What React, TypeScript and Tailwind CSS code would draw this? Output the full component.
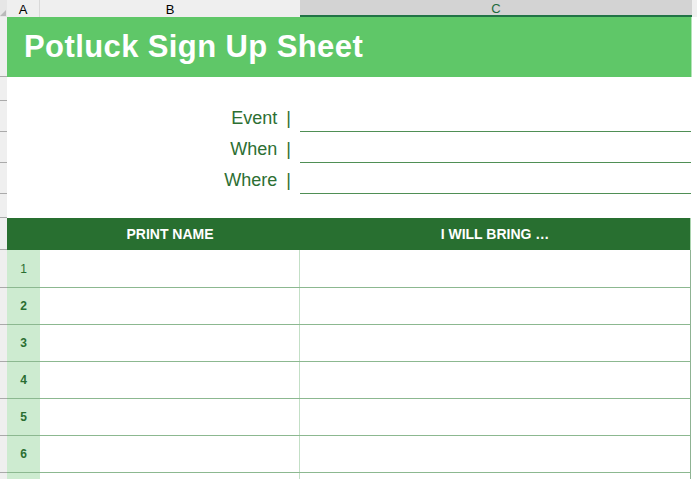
import React from "react";

function Gutter({ line = true }: { line?: boolean }) {
  return (
    <div
      className={
        "relative w-[7px] shrink-0 bg-[#efefef] " + (line ? "border-b border-[#aaaaaa]" : "")
      }
    />
  );
}

function InfoRow({ label }: { label: string }) {
  return (
    <div className="flex h-[31px]">
      <Gutter />
      <div className="flex w-[293px] items-center justify-end pr-[9px] pt-[3px] text-[18px] text-[#2d6f33]">
        <span>{label}</span>
        <span className="ml-[9px]">|</span>
      </div>
      <div className="w-[391px] border-b border-[#4f8f55]" />
    </div>
  );
}

function DataRow({ n, bold = true, h = "h-[37px]" }: { n?: number; bold?: boolean; h?: string }) {
  return (
    <div className={"flex " + h}>
      <Gutter />
      <div className="flex w-[684px] border-b border-[#8cb890]">
        <div
          className={
            "flex w-[33px] items-center justify-center bg-[#cdebd0] text-[12px] text-[#2a6e31] " +
            (bold ? "font-bold" : "")
          }
        >
          {n}
        </div>
        <div className="w-[260px] border-r border-[#c3dfc6] bg-white" />
        <div className="w-[391px] border-r border-[#8fb393] bg-white" />
      </div>
    </div>
  );
}

export default function App() {
  return (
    <div className="h-[479px] w-[697px] overflow-hidden bg-white font-['Liberation_Sans',Arial,sans-serif]">
      {/* column headers */}
      <div className="flex h-[17px] text-[13px] leading-none">
        <div className="relative w-[7px] shrink-0 bg-[#e6e6e6]">
          <svg width="7" height="17" className="absolute left-0 top-0">
            <polygon points="0,16 6,10 6,16" fill="#b9b9b9" />
          </svg>
        </div>
        <div className="flex w-[33px] items-end justify-center border-r border-[#d9d9d9] bg-[#efefef] pb-[1px] text-black">
          A
        </div>
        <div className="flex w-[260px] items-end justify-center bg-[#efefef] pb-[1px] text-black">
          B
        </div>
        <div className="flex w-[392px] items-end justify-center border-b-2 border-[#217346] bg-[#d3d3d3] text-[#1e6b3c]">
          C
        </div>
        <div className="flex-1 bg-[#f0f0f0]" />
      </div>

      {/* title */}
      <div className="flex h-[60px]">
        <Gutter />
        <div className="flex w-[684px] items-center bg-[#5fc768] pl-[17px] text-[31px] font-bold tracking-[0.4px] text-white">
          Potluck Sign Up Sheet
        </div>
        <div className="w-px bg-[#b4e2b8]" />
      </div>

      {/* spacer */}
      <div className="flex h-[24px]">
        <Gutter />
        <div className="flex-1" />
      </div>

      <InfoRow label="Event" />
      <InfoRow label="When" />
      <InfoRow label="Where" />

      <div className="flex h-[24px]">
        <Gutter />
        <div className="flex-1" />
      </div>

      {/* table header */}
      <div className="flex h-[32px]">
        <Gutter />
        <div className="flex w-[683px] bg-[#286f30] text-[14px] font-bold text-white">
          <div className="w-[33px]" />
          <div className="flex w-[260px] items-center justify-center">PRINT NAME</div>
          <div className="flex w-[390px] items-center justify-center">I WILL BRING …</div>
        </div>
        <div className="w-px bg-[#a9d3ad]" />
      </div>

      <DataRow n={1} bold={false} h="h-[38px]" />
      <DataRow n={2} />
      <DataRow n={3} />
      <DataRow n={4} />
      <DataRow n={5} />
      <DataRow n={6} />
      <DataRow />
    </div>
  );
}
